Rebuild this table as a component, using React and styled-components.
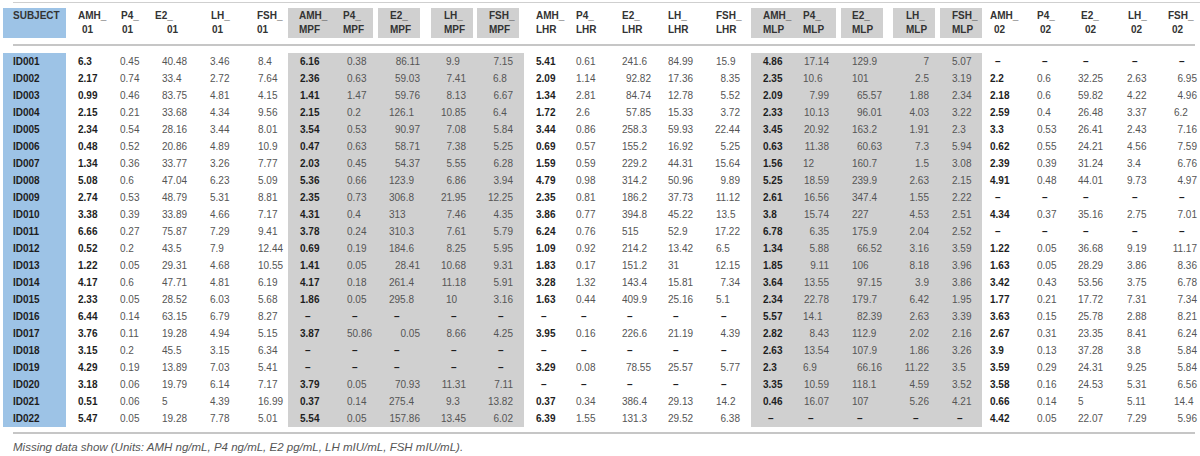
import React from "react";
import styled, { createGlobalStyle } from "styled-components";

const GlobalStyle = createGlobalStyle`
    html, body {
        margin: 0;
        padding: 0;
        background: #ffffff;
    }
    body {
        font-family: "Liberation Sans", Arial, sans-serif;
    }
`;

const BLUE = "#9dc3e6";
const GRAY = "#d0d0d0";
const RULE = "#c6c6c6";

// each column: cell edges [l, r], header text x, value text x, value mode
const COLUMNS = [
    { head: ["SUBJECT"], l: 3, r: 66, hx: 13, vx: 13, tone: "blue", block: [3, 66], id: true },
    { head: ["AMH_", "01"], l: 66, r: 114, hx: 78, sub: 82, vx: 78, bold: true },
    { head: ["P4_", "01"], l: 114, r: 154, hx: 121, sub: 122, vx: 120 },
    { head: ["E2_", "01"], l: 154, r: 204, hx: 155, sub: 167, vx: 162 },
    { head: ["LH_", "01"], l: 204, r: 251, hx: 211, sub: 212, vx: 210 },
    { head: ["FSH_", "01"], l: 251, r: 288, hx: 257, sub: 257, vx: 258 },
    { head: ["AMH_", "MPF"], l: 288, r: 341, hx: 299, vx: 300, bold: true, tone: "gray", block: [288, 341] },
    { head: ["P4_", "MPF"], l: 341, r: 378, hx: 343, vx: 347, tone: "gray", block: [341, 373] },
    { head: ["E2_", "MPF"], l: 378, r: 426, hx: 390, vx: 389, mode: "dec", rx: 420, tone: "gray", block: [378, 420] },
    { head: ["LH_", "MPF"], l: 426, r: 477, hx: 444, vx: 446, mode: "dec", rx: 466, tone: "gray", block: [431, 473] },
    { head: ["FSH_", "MPF"], l: 477, r: 524, hx: 489, vx: 493, mode: "dec", rx: 513, tone: "gray", block: [477, 519] },
    { head: ["AMH_", "LHR"], l: 524, r: 570, hx: 536, vx: 536, bold: true },
    { head: ["P4_", "LHR"], l: 570, r: 616, hx: 576, vx: 576 },
    { head: ["E2_", "LHR"], l: 616, r: 662, hx: 622, vx: 622, mode: "dec", rx: 651 },
    { head: ["LH_", "LHR"], l: 662, r: 710, hx: 668, vx: 668 },
    { head: ["FSH_", "LHR"], l: 710, r: 751, hx: 716, vx: 716, mode: "dec", rx: 740 },
    { head: ["AMH_", "MLP"], l: 751, r: 797, hx: 763, vx: 763, bold: true, tone: "gray", block: [751, 797] },
    { head: ["P4_", "MLP"], l: 797, r: 841, hx: 803, vx: 803, mode: "dec", rx: 829, tone: "gray", block: [797, 836] },
    { head: ["E2_", "MLP"], l: 841, r: 888, hx: 852, vx: 852, mode: "dec", rx: 882, tone: "gray", block: [841, 883] },
    { head: ["LH_", "MLP"], l: 888, r: 935, hx: 906, vx: 908, mode: "right", rx: 929, tone: "gray", block: [893, 935] },
    { head: ["FSH_", "MLP"], l: 935, r: 982, hx: 952, vx: 952, tone: "gray", block: [940, 982] },
    { head: ["AMH_", "02"], l: 982, r: 1031, hx: 990, sub: 994, vx: 990, bold: true },
    { head: ["P4_", "02"], l: 1031, r: 1077, hx: 1037, sub: 1040, vx: 1037 },
    { head: ["E2_", "02"], l: 1077, r: 1121, hx: 1081, sub: 1085, vx: 1078 },
    { head: ["LH_", "02"], l: 1121, r: 1168, hx: 1128, sub: 1131, vx: 1127 },
    { head: ["FSH_", "02"], l: 1168, r: 1200, hx: 1168, sub: 1172, vx: 1174, mode: "dec", rx: 1197 },
];

const TEMPLATE = COLUMNS.map((c) => `${c.r - c.l}px`).join(" ");

const ROWS = [
    ["ID001", "6.3", "0.45", "40.48", "3.46", "8.4", "6.16", "0.38", "86.11", "9.9", "7.15", "5.41", "0.61", "241.6", "84.99", "15.9", "4.86", "17.14", "129.9", "7", "5.07", "-", "-", "-", "-", "-"],
    ["ID002", "2.17", "0.74", "33.4", "2.72", "7.64", "2.36", "0.63", "59.03", "7.41", "6.8", "2.09", "1.14", "92.82", "17.36", "8.35", "2.35", "10.6", "101", "2.5", "3.19", "2.2", "0.6", "32.25", "2.63", "6.95"],
    ["ID003", "0.99", "0.46", "83.75", "4.81", "4.15", "1.41", "1.47", "59.76", "8.13", "6.67", "1.34", "2.81", "84.74", "12.78", "5.52", "2.09", "7.99", "65.57", "1.88", "2.34", "2.18", "0.6", "59.82", "4.22", "4.96"],
    ["ID004", "2.15", "0.21", "33.68", "4.34", "9.56", "2.15", "0.2", "126.1", "10.85", "6.4", "1.72", "2.6", "57.85", "15.33", "3.72", "2.33", "10.13", "96.01", "4.03", "3.22", "2.59", "0.4", "26.48", "3.37", "6.2"],
    ["ID005", "2.34", "0.54", "28.16", "3.44", "8.01", "3.54", "0.53", "90.97", "7.08", "5.84", "3.44", "0.86", "258.3", "59.93", "22.44", "3.45", "20.92", "163.2", "1.91", "2.3", "3.3", "0.53", "26.41", "2.43", "7.16"],
    ["ID006", "0.48", "0.52", "20.86", "4.89", "10.9", "0.47", "0.63", "58.71", "7.38", "5.25", "0.69", "0.57", "155.2", "16.92", "5.25", "0.63", "11.38", "60.63", "7.3", "5.94", "0.62", "0.55", "24.21", "4.56", "7.59"],
    ["ID007", "1.34", "0.36", "33.77", "3.26", "7.77", "2.03", "0.45", "54.37", "5.55", "6.28", "1.59", "0.59", "229.2", "44.31", "15.64", "1.56", "12", "160.7", "1.5", "3.08", "2.39", "0.39", "31.24", "3.4", "6.76"],
    ["ID008", "5.08", "0.6", "47.04", "6.23", "5.09", "5.36", "0.66", "123.9", "6.86", "3.94", "4.79", "0.98", "314.2", "50.96", "9.89", "5.25", "18.59", "239.9", "2.63", "2.15", "4.91", "0.48", "44.01", "9.73", "4.97"],
    ["ID009", "2.74", "0.53", "48.79", "5.31", "8.81", "2.35", "0.73", "306.8", "21.95", "12.25", "2.35", "0.81", "186.2", "37.73", "11.12", "2.61", "16.56", "347.4", "1.55", "2.22", "-", "-", "-", "-", "-"],
    ["ID010", "3.38", "0.39", "33.89", "4.66", "7.17", "4.31", "0.4", "313", "7.46", "4.35", "3.86", "0.77", "394.8", "45.22", "13.5", "3.8", "15.74", "227", "4.53", "2.51", "4.34", "0.37", "35.16", "2.75", "7.01"],
    ["ID011", "6.66", "0.27", "75.87", "7.29", "9.41", "3.78", "0.24", "310.3", "7.61", "5.79", "6.24", "0.76", "515", "52.9", "17.22", "6.78", "6.35", "175.9", "2.04", "2.52", "-", "-", "-", "-", "-"],
    ["ID012", "0.52", "0.2", "43.5", "7.9", "12.44", "0.69", "0.19", "184.6", "8.25", "5.95", "1.09", "0.92", "214.2", "13.42", "6.5", "1.34", "5.88", "66.52", "3.16", "3.59", "1.22", "0.05", "36.68", "9.19", "11.17"],
    ["ID013", "1.22", "0.05", "29.31", "4.68", "10.55", "1.41", "0.05", "28.41", "10.68", "9.31", "1.83", "0.17", "151.2", "31", "12.15", "1.85", "9.11", "106", "8.18", "3.96", "1.63", "0.05", "28.29", "3.86", "8.36"],
    ["ID014", "4.17", "0.6", "47.71", "4.81", "6.19", "4.17", "0.18", "261.4", "11.18", "5.91", "3.28", "1.32", "143.4", "15.81", "7.34", "3.64", "13.55", "97.15", "3.9", "3.86", "3.42", "0.43", "53.56", "3.75", "6.78"],
    ["ID015", "2.33", "0.05", "28.52", "6.03", "5.68", "1.86", "0.05", "295.8", "10", "3.16", "1.63", "0.44", "409.9", "25.16", "5.1", "2.34", "22.78", "179.7", "6.42", "1.95", "1.77", "0.21", "17.72", "7.31", "7.34"],
    ["ID016", "6.44", "0.14", "63.15", "6.79", "8.27", "-", "-", "-", "-", "-", "-", "-", "-", "-", "-", "5.57", "14.1", "82.39", "2.63", "3.39", "3.63", "0.15", "25.78", "2.88", "8.21"],
    ["ID017", "3.76", "0.11", "19.28", "4.94", "5.15", "3.87", "50.86", "0.05", "8.66", "4.25", "3.95", "0.16", "226.6", "21.19", "4.39", "2.82", "8.43", "112.9", "2.02", "2.16", "2.67", "0.31", "23.35", "8.41", "6.24"],
    ["ID018", "3.15", "0.2", "45.5", "3.15", "6.34", "-", "-", "-", "-", "-", "-", "-", "-", "-", "-", "2.63", "13.54", "107.9", "1.86", "3.26", "3.9", "0.13", "37.28", "3.8", "5.84"],
    ["ID019", "4.29", "0.19", "13.89", "7.03", "5.41", "-", "-", "-", "-", "-", "3.29", "0.08", "78.55", "25.57", "5.77", "2.3", "6.9", "66.16", "11.22", "3.5", "3.59", "0.29", "24.31", "9.25", "5.84"],
    ["ID020", "3.18", "0.06", "19.79", "6.14", "7.17", "3.79", "0.05", "70.93", "11.31", "7.11", "-", "-", "-", "-", "-", "3.35", "10.59", "118.1", "4.59", "3.52", "3.58", "0.16", "24.53", "5.31", "6.56"],
    ["ID021", "0.51", "0.06", "5", "4.39", "16.99", "0.37", "0.14", "275.4", "9.3", "13.82", "0.37", "0.34", "386.4", "29.13", "14.2", "0.46", "16.07", "107", "5.26", "4.21", "0.66", "0.14", "5", "5.11", "14.4"],
    ["ID022", "5.47", "0.05", "19.28", "7.78", "5.01", "5.54", "0.05", "157.86", "13.45", "6.02", "6.39", "1.55", "131.3", "29.52", "6.38", "-", "-", "-", "-", "-", "4.42", "0.05", "22.07", "7.29", "5.96"],
];

const toneColor = (tone) =>
    tone === "blue" ? BLUE : tone === "gray" ? GRAY : "transparent";

// where a value sits inside its column
const placeValue = (col, value) => {
    if (value === "-") return { align: "left", pl: col.vx - col.l + 5, pr: 0 };
    const right =
        col.mode === "right" || (col.mode === "dec" && /\.\d\d$/.test(value));
    if (right) return { align: "right", pl: 0, pr: col.r - col.rx };
    return { align: "left", pl: col.vx - col.l, pr: 0 };
};

const App = () => {
    return (
        <Page>
            <GlobalStyle />
            <TopRule />
            <HeaderRow>
                {COLUMNS.map((col) => {
                    const [from, to] = col.block || [col.l, col.r];
                    return (
                        <HeaderCell key={col.head.join("")}>
                            <HeaderBlock
                                $tone={col.block ? col.tone : null}
                                $ml={from - col.l}
                                $mr={col.r - to}
                                $pl={col.hx - from}
                            >
                                <HeadLine>{col.head[0]}</HeadLine>
                                {col.head[1] && (
                                    <HeadLine $indent={col.sub ? col.sub - col.hx : 0}>
                                        {col.head[1]}
                                    </HeadLine>
                                )}
                            </HeaderBlock>
                        </HeaderCell>
                    );
                })}
            </HeaderRow>
            <MidRule />
            <Body>
                {ROWS.map((row) => (
                    <DataRow key={row[0]}>
                        {row.map((value, i) => {
                            const col = COLUMNS[i];
                            const place = placeValue(col, value);
                            return (
                                <Cell
                                    key={i}
                                    $tone={col.tone}
                                    $align={place.align}
                                    $pl={place.pl}
                                    $pr={place.pr}
                                    $strong={col.bold || col.id}
                                    $dash={value === "-"}
                                >
                                    {value === "-" ? "–" : value}
                                </Cell>
                            );
                        })}
                    </DataRow>
                ))}
            </Body>
            <BottomRule />
            <Caption>
                Missing data show (Units: AMH ng/mL, P4 ng/mL, E2 pg/mL, LH
                mIU/mL, FSH mIU/mL).
            </Caption>
        </Page>
    );
};

const Page = styled.div`
    width: 1197px;
    padding: 2px 0 0 3px;
    font-family: "Liberation Sans", Arial, sans-serif;
`;

const TopRule = styled.div`
    height: 1px;
    margin-left: 10px;
    background: #cfcfcf;
`;

const MidRule = styled.div`
    height: 2px;
    margin: 6px 5px 0 10px;
    background: ${RULE};
`;

const BottomRule = styled.div`
    height: 2px;
    margin: 5px 5px 0 10px;
    background: ${RULE};
`;

const HeaderRow = styled.div`
    display: grid;
    grid-template-columns: ${TEMPLATE};
    margin-top: 5px;
`;

const HeaderCell = styled.div`
    display: flex;
`;

const HeaderBlock = styled.div`
    flex: 1;
    height: 30px;
    box-sizing: border-box;
    margin-left: ${(p) => p.$ml}px;
    margin-right: ${(p) => p.$mr}px;
    padding: 1px 0 0 ${(p) => p.$pl}px;
    background: ${(p) => toneColor(p.$tone)};
    display: flex;
    flex-direction: column;
`;

const HeadLine = styled.span`
    display: block;
    padding-left: ${(p) => p.$indent || 0}px;
    font-size: 10px;
    line-height: 14px;
    font-weight: 700;
    color: #333333;
    white-space: nowrap;
`;

const Body = styled.div`
    margin-top: 7px;
`;

const DataRow = styled.div`
    display: grid;
    grid-template-columns: ${TEMPLATE};
    height: 17px;
`;

const Cell = styled.div`
    background: ${(p) => toneColor(p.$tone)};
    padding-left: ${(p) => p.$pl}px;
    padding-right: ${(p) => p.$pr}px;
    text-align: ${(p) => p.$align};
    font-size: 10px;
    line-height: 17px;
    white-space: nowrap;
    overflow: hidden;
    font-weight: ${(p) => (p.$strong || p.$dash ? 700 : 400)};
    color: ${(p) => (p.$strong || p.$dash ? "#1e1e1e" : "#555555")};
`;

const Caption = styled.div`
    margin: 6px 0 0 10px;
    font-size: 11.5px;
    line-height: 14px;
    font-style: italic;
    color: #555555;
`;

export default App;
